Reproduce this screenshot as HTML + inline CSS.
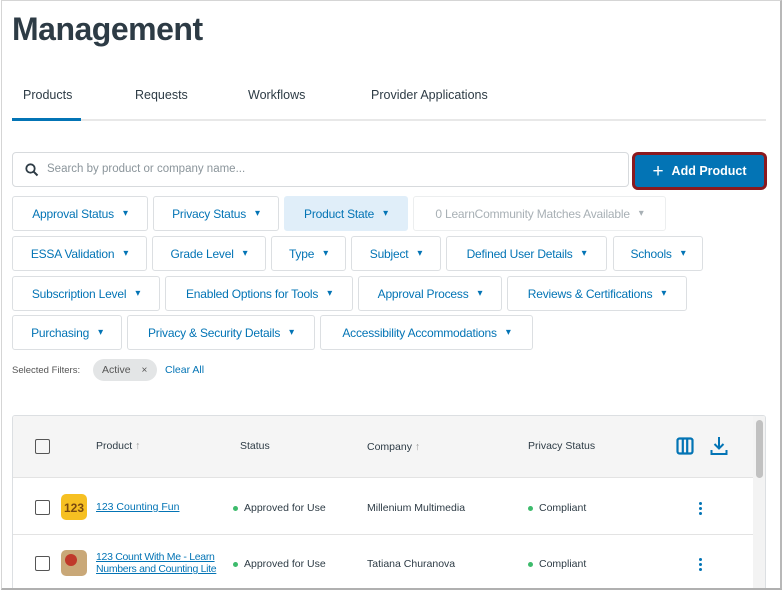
<!DOCTYPE html>
<html><head><meta charset="utf-8"><style>
*{box-sizing:border-box;margin:0;padding:0}
body{width:784px;height:591px;overflow:hidden;background:#fff;font-family:"Liberation Sans",sans-serif;position:relative}
.frame{position:absolute;left:1px;top:0;width:781px;height:590px;border:1px solid #d5d5d5;border-right:2px solid #b8b8b8;border-bottom:2px solid #b0b0b0;z-index:5;pointer-events:none}
.cover{position:absolute;left:0;top:590px;width:784px;height:10px;background:#fff;z-index:4}
.a{position:absolute}
h1{position:absolute;left:12px;top:11px;font-size:32px;font-weight:bold;color:#2d3b45;letter-spacing:-0.5px}
.tab{position:absolute;top:88px;font-size:12.5px;color:#2d3b45}
.btn{position:absolute;height:35px;border:1px solid #dcdfe2;border-radius:3px;color:#0374b5;font-size:12px;display:flex;align-items:center;justify-content:center;white-space:nowrap;background:#fff;letter-spacing:-0.2px}
.btn:after{content:"▾";font-size:10px;margin-left:9px}
.th{position:absolute;top:440px;font-size:10.5px;color:#2d3b45}
.td{position:absolute;font-size:10.5px;color:#2d3b45}
.cb{position:absolute;width:15px;height:15px;border:1.5px solid #555;border-radius:2px}
.dot{display:inline-block;width:5px;height:5px;border-radius:50%;background:#3dbb6c;margin-right:6px;vertical-align:middle}
.kebab{position:absolute;width:3px;height:3px;border-radius:50%;background:#0374b5;box-shadow:0 5px 0 #0374b5,0 10px 0 #0374b5}
a{color:#0374b5}
</style></head><body>
<div class="frame"></div>
<div class="cover"></div>
<h1>Management</h1>
<div class="tab" style="left:23px">Products</div>
<div class="tab" style="left:135px">Requests</div>
<div class="tab" style="left:248px">Workflows</div>
<div class="tab" style="left:371px">Provider Applications</div>
<div class="a" style="left:12px;top:119px;width:754px;height:2px;background:#e8e8e8"></div>
<div class="a" style="left:12px;top:118px;width:69px;height:3px;background:#0374b5"></div>

<div class="a" style="left:12px;top:152px;width:617px;height:35px;border:1px solid #d7dadd;border-radius:4px"></div>
<svg class="a" style="left:25px;top:163px" width="14" height="14" viewBox="0 0 14 14"><circle cx="5.5" cy="5.5" r="4.2" fill="none" stroke="#2d3b45" stroke-width="1.8"/><path d="M8.6 8.6L12.5 12.5" stroke="#2d3b45" stroke-width="2"/></svg>
<div class="a" style="left:47px;top:163px;font-size:11.5px;color:#8b959b">Search by product or company name...</div>
<div class="a" style="left:632px;top:152px;width:135px;height:38px;border:3px solid #8b1a1f;border-radius:6px;background:#0374b5;color:#fff;font-size:12.5px;font-weight:bold;display:flex;align-items:center;justify-content:center"><span style="font-size:19px;font-weight:normal;margin-right:8px;line-height:1">+</span>Add Product</div>

<div class="btn" style="left:12px;top:196px;width:136px">Approval Status</div>
<div class="btn" style="left:153px;top:196px;width:126px">Privacy Status</div>
<div class="btn" style="left:284px;top:196px;width:124px;background:#e0eef9;border-color:#e0eef9">Product State</div>
<div class="btn" style="left:413px;top:196px;width:253px;color:#a8b0b5;border-color:#eceeef">0 LearnCommunity Matches Available</div>
<div class="btn" style="left:12px;top:236px;width:135px">ESSA Validation</div>
<div class="btn" style="left:152px;top:236px;width:114px">Grade Level</div>
<div class="btn" style="left:271px;top:236px;width:75px">Type</div>
<div class="btn" style="left:351px;top:236px;width:90px">Subject</div>
<div class="btn" style="left:446px;top:236px;width:161px">Defined User Details</div>
<div class="btn" style="left:613px;top:236px;width:90px">Schools</div>
<div class="btn" style="left:12px;top:276px;width:148px">Subscription Level</div>
<div class="btn" style="left:165px;top:276px;width:188px">Enabled Options for Tools</div>
<div class="btn" style="left:358px;top:276px;width:144px">Approval Process</div>
<div class="btn" style="left:507px;top:276px;width:180px">Reviews &amp; Certifications</div>
<div class="btn" style="left:12px;top:315px;width:110px">Purchasing</div>
<div class="btn" style="left:127px;top:315px;width:188px">Privacy &amp; Security Details</div>
<div class="btn" style="left:320px;top:315px;width:213px">Accessibility Accommodations</div>

<div class="a" style="left:12px;top:365px;font-size:9.5px;color:#555">Selected Filters:</div>
<div class="a" style="left:93px;top:359px;width:64px;height:22px;border-radius:11px;background:#e3e5e6;font-size:10.5px;color:#555;padding:5px 0 0 9px">Active <span style="margin-left:8px;font-size:10px">×</span></div>
<div class="a" style="left:165px;top:364px;font-size:10.5px;color:#0374b5">Clear All</div>

<div class="a" style="left:12px;top:415px;width:754px;height:180px;border:1px solid #dcdfe2;border-radius:3px;overflow:hidden">
 <div class="a" style="left:0;top:0;width:754px;height:62px;background:#f5f5f5;border-bottom:1px solid #e3e3e3"></div>
 <div class="a" style="left:0;top:118px;width:740px;height:1px;background:#e3e3e3"></div>
 <div class="a" style="left:740px;top:0;width:14px;height:180px;background:#f3f3f3"></div>
 <div class="a" style="left:743px;top:4px;width:7px;height:58px;border-radius:4px;background:#c1c1c1"></div>
</div>
<div class="cb" style="left:35px;top:439px"></div>
<div class="th" style="left:96px">Product <span style="color:#999">↑</span></div>
<div class="th" style="left:240px">Status</div>
<div class="th" style="left:367px;top:441px">Company <span style="color:#999">↑</span></div>
<div class="th" style="left:528px">Privacy Status</div>
<svg class="a" style="left:676px;top:437px" width="18" height="18" viewBox="0 0 18 18"><rect x="1.5" y="1.5" width="15" height="15" rx="2" fill="none" stroke="#0374b5" stroke-width="2.2"/><path d="M6.8 2v14M11.2 2v14" stroke="#0374b5" stroke-width="2.2"/></svg>
<svg class="a" style="left:710px;top:436px" width="18" height="20" viewBox="0 0 18 20"><path d="M9 1v11M4.5 8l4.5 4.5L13.5 8" fill="none" stroke="#0374b5" stroke-width="2"/><path d="M1.5 14v4h15v-4" fill="none" stroke="#0374b5" stroke-width="2"/></svg>

<div class="cb" style="left:35px;top:500px"></div>
<div class="a" style="left:61px;top:494px;width:26px;height:26px;border-radius:5px;background:#f6c022;font-size:12px;font-weight:bold;color:#7a4a10;text-align:center;padding-top:7px">123</div>
<div class="td" style="left:96px;top:501px"><a href="#">123 Counting Fun</a></div>
<div class="td" style="left:233px;top:502px"><span class="dot"></span>Approved for Use</div>
<div class="td" style="left:367px;top:502px">Millenium Multimedia</div>
<div class="td" style="left:528px;top:502px"><span class="dot"></span>Compliant</div>
<div class="kebab" style="left:699px;top:502px"></div>

<div class="cb" style="left:35px;top:556px"></div>
<div class="a" style="left:61px;top:550px;width:26px;height:26px;border-radius:5px;background:#c9a878"><div style="margin:4px 0 0 4px;width:12px;height:12px;border-radius:50%;background:#c0392b"></div></div>
<div class="td" style="left:96px;top:551px;line-height:12px;letter-spacing:-0.3px"><a href="#">123 Count With Me - Learn<br>Numbers and Counting Lite</a></div>
<div class="td" style="left:233px;top:558px"><span class="dot"></span>Approved for Use</div>
<div class="td" style="left:367px;top:558px">Tatiana Churanova</div>
<div class="td" style="left:528px;top:558px"><span class="dot"></span>Compliant</div>
<div class="kebab" style="left:699px;top:558px"></div>
</body></html>
